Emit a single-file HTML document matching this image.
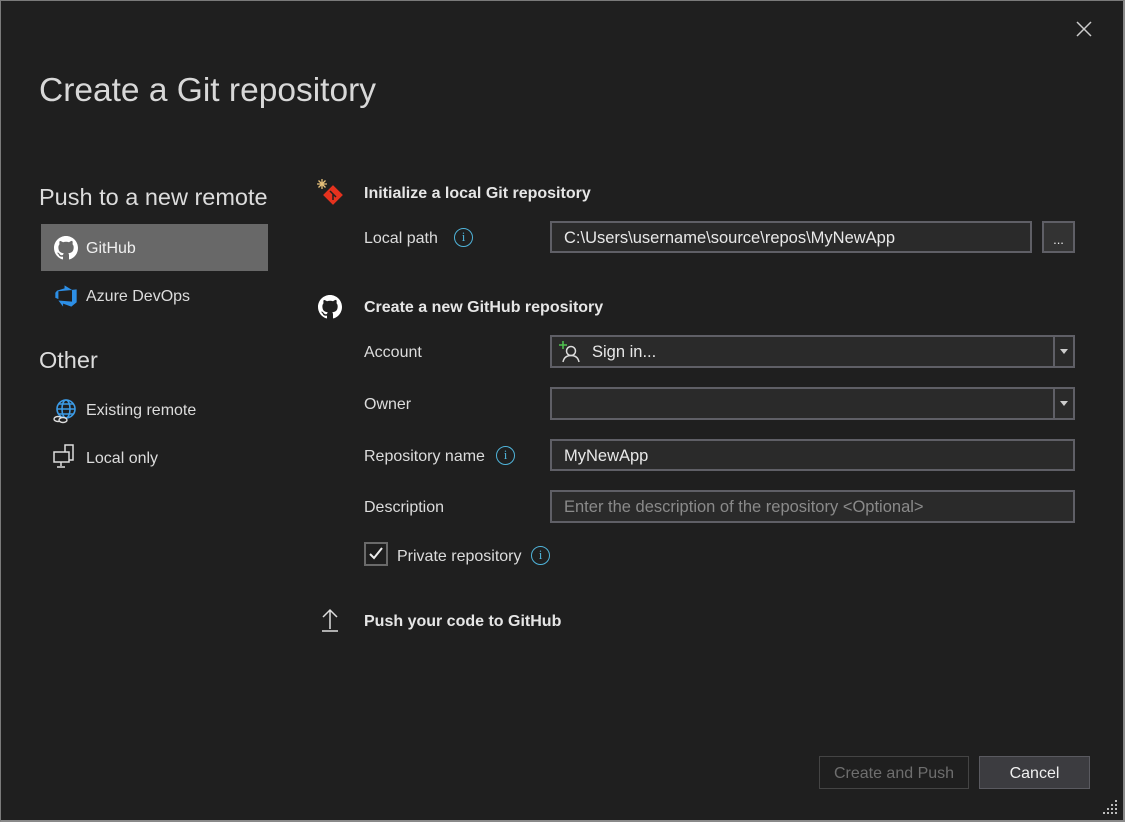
<!DOCTYPE html>
<html><head><meta charset="utf-8"><style>
*{box-sizing:border-box;margin:0;padding:0}
body{width:1125px;height:822px;background:#1f1f1f;font-family:"Liberation Sans",sans-serif;color:#e0e0e0;position:relative;overflow:hidden}
.frame{position:absolute;left:0;top:0;width:1125px;height:822px;border:1px solid #7a7a7a;border-right:2px solid #8a8a8a;border-bottom:2px solid #8a8a8a}
.a{position:absolute;white-space:nowrap}
.t{font-size:16px;color:#dcdcdc}
.b{font-size:16px;font-weight:bold;color:#e6e6e6}
.in{position:absolute;background:#2a2a2a;border:2px solid #5f5f66;font-size:16.5px;color:#e8e8e8;padding-left:12px;line-height:30px}
.info{position:absolute;width:19px;height:19px;border:1.5px solid #4fb3d9;border-radius:50%;color:#4fb3d9;font-size:13px;text-align:center;line-height:16px;font-family:"Liberation Serif",serif}
.dd{position:absolute;right:0;top:0;width:20px;height:100%;border-left:2px solid #5f5f66}
.dd:after{content:"";position:absolute;left:5px;top:12px;border:4px solid transparent;border-top:5px solid #ccc}
</style></head><body>
<div class="frame"></div>
<svg class="a" style="left:1075px;top:20px" width="18" height="18"><path d="M2 2L16 16M16 2L2 16" stroke="#ccc" stroke-width="1.5"/></svg>
<div class="a" style="left:39px;top:72px;font-size:33.5px;color:#d8d8d8;font-weight:300">Create a Git repository</div>

<div class="a" style="left:39px;top:184px;font-size:23.5px;color:#dcdcdc">Push to a new remote</div>
<div class="a" style="left:41px;top:224px;width:227px;height:47px;background:#686868"></div>
<svg class="a" style="left:54px;top:236px" width="24" height="24" viewBox="0 0 16 16"><path fill="#fff" d="M8 0C3.58 0 0 3.58 0 8c0 3.54 2.29 6.53 5.47 7.59.4.07.55-.17.55-.38 0-.19-.01-.82-.01-1.49-2.010.37-2.53-.49-2.69-.94-.09-.23-.48-.94-.82-1.13-.28-.15-.68-.52-.01-.53.63-.01 1.08.58 1.23.82.72 1.21 1.87.87 2.33.66.07-.52.28-.87.51-1.07-1.78-.2-3.64-.89-3.64-3.95 0-.87.31-1.59.82-2.15-.08-.2-.36-1.02.08-2.12 0 0 .67-.21 2.2.82.64-.18 1.32-.27 2-.27s1.36.09 2 .27c1.53-1.04 2.2-.82 2.2-.82.44 1.1.16 1.92.08 2.12.51.56.82 1.27.82 2.15 0 3.07-1.87 3.75-3.65 3.95.29.25.54.73.54 1.48 0 1.07-.01 1.93-.01 2.2 0 .21.15.46.55.38A8.013 8.013 0 0016 8c0-4.42-3.58-8-8-8z"/></svg>
<div class="a t" style="left:86px;top:240px;color:#f0f0f0">GitHub</div>
<svg class="a" style="left:54px;top:284px" width="24" height="24" viewBox="0 0 18 18"><path fill="#2d8fe6" d="M17 4v9.7l-4 3.3-6.2-2.3v2.3L3.3 12.4l10.2.8V4.4L17 4zm-3.4.5L7.9 1v2.3L2.3 5 1 6.6v3.7l2.3 1V5.4z"/></svg>
<div class="a t" style="left:86px;top:288px">Azure DevOps</div>

<div class="a" style="left:39px;top:347px;font-size:23.5px;color:#dcdcdc">Other</div>
<svg class="a" style="left:52px;top:398px" width="26" height="26" viewBox="0 0 26 26" fill="none" stroke="#3c9be6" stroke-width="1.6"><circle cx="14" cy="11" r="9"/><ellipse cx="14" cy="11" rx="4" ry="9"/><path d="M5 11h18M7 6h14M7 16h14"/><g stroke="#ddd" stroke-width="1.4" fill="#1f1f1f"><ellipse cx="6" cy="21" rx="4" ry="2.5"/><ellipse cx="11" cy="22" rx="4" ry="2.5"/></g></svg>
<div class="a t" style="left:86px;top:402px">Existing remote</div>
<svg class="a" style="left:52px;top:444px" width="26" height="26" viewBox="0 0 26 26" fill="none" stroke="#ddd" stroke-width="1.5"><rect x="13" y="1" width="8" height="15"/><rect x="2" y="8" width="15" height="10" fill="#1f1f1f"/><path d="M9 18v4M5 23h8"/></svg>
<div class="a t" style="left:86px;top:450px">Local only</div>

<svg class="a" style="left:316px;top:178px" width="30" height="30" viewBox="0 0 30 30"><g stroke="#e6c07a" stroke-width="1.3"><path d="M6 1v10M1 6h10M2.5 2.5l7 7M9.5 2.5l-7 7"/></g><rect x="10" y="10" width="14" height="14" fill="#e5321e" transform="rotate(45 17 17)"/><path d="M14 13l6 6M17 16v6" stroke="#1f1f1f" stroke-width="1.5"/></svg>
<div class="a b" style="left:364px;top:185px">Initialize a local Git repository</div>
<div class="a t" style="left:364px;top:230px">Local path</div>
<div class="info" style="left:454px;top:228px">i</div>
<div class="in" style="left:550px;top:221px;width:482px;height:32px">C:\Users\username\source\repos\MyNewApp</div>
<div class="in" style="left:1042px;top:221px;width:33px;height:32px;background:#333;padding:0;text-align:center;font-size:13px;line-height:34px">...</div>

<svg class="a" style="left:318px;top:295px" width="24" height="24" viewBox="0 0 16 16"><path fill="#fff" d="M8 0C3.58 0 0 3.58 0 8c0 3.54 2.29 6.53 5.47 7.59.4.07.55-.17.55-.38 0-.19-.01-.82-.01-1.49-2.01.37-2.53-.49-2.69-.94-.09-.23-.48-.94-.82-1.13-.28-.15-.68-.52-.01-.53.63-.01 1.08.58 1.23.82.72 1.21 1.87.87 2.33.66.07-.52.28-.87.51-1.07-1.78-.2-3.64-.89-3.64-3.95 0-.87.31-1.59.82-2.15-.08-.2-.36-1.02.08-2.12 0 0 .67-.21 2.2.82.64-.18 1.32-.27 2-.27s1.36.09 2 .27c1.53-1.04 2.2-.82 2.2-.82.44 1.1.16 1.92.08 2.12.51.56.82 1.27.82 2.15 0 3.07-1.87 3.75-3.65 3.95.29.25.54.73.54 1.48 0 1.07-.01 1.93-.01 2.2 0 .21.15.46.55.38A8.013 8.013 0 0016 8c0-4.42-3.58-8-8-8z"/></svg>
<div class="a b" style="left:364px;top:299px">Create a new GitHub repository</div>

<div class="a t" style="left:364px;top:344px">Account</div>
<div class="in" style="left:550px;top:335px;width:525px;height:33px;padding-left:40px">Sign in...<div class="dd"></div></div>
<svg class="a" style="left:558px;top:340px" width="24" height="24" viewBox="0 0 24 24" fill="none"><path d="M5 1v8M1 5h8" stroke="#4fc34f" stroke-width="1.5"/><circle cx="13" cy="11" r="4.5" stroke="#ddd" stroke-width="1.5"/><path d="M5 22c1-5 4-6.5 8-6.5s7 1.5 8 6.5" stroke="#ddd" stroke-width="1.5"/></svg>

<div class="a t" style="left:364px;top:396px">Owner</div>
<div class="in" style="left:550px;top:387px;width:525px;height:33px"><div class="dd"></div></div>

<div class="a t" style="left:364px;top:448px">Repository name</div>
<div class="info" style="left:496px;top:446px">i</div>
<div class="in" style="left:550px;top:439px;width:525px;height:32px">MyNewApp</div>

<div class="a t" style="left:364px;top:499px">Description</div>
<div class="in" style="left:550px;top:490px;width:525px;height:33px;color:#8a8a8a">Enter the description of the repository &lt;Optional&gt;</div>

<div class="a" style="left:364px;top:542px;width:24px;height:24px;border:2px solid #6a6a6a"></div>
<svg class="a" style="left:367px;top:545px" width="18" height="18"><path d="M3 9l4 4 8-10" stroke="#eee" stroke-width="2" fill="none"/></svg>
<div class="a t" style="left:397px;top:548px">Private repository</div>
<div class="info" style="left:531px;top:546px">i</div>

<svg class="a" style="left:318px;top:607px" width="24" height="26"><path d="M12 3v19M5 10l7-7 7 7M4 24h16" stroke="#ddd" stroke-width="1.5" fill="none"/></svg>
<div class="a b" style="left:364px;top:613px">Push your code to GitHub</div>

<div class="a" style="left:819px;top:756px;width:150px;height:33px;border:1px solid #444;color:#6e6e6e;font-size:16px;text-align:center;line-height:33px">Create and Push</div>
<div class="a" style="left:979px;top:756px;width:111px;height:33px;background:#3c3c40;border:1px solid #5a5a60;color:#f0f0f0;font-size:16px;text-align:center;line-height:33px">Cancel</div>
<svg class="a" style="left:1103px;top:800px" width="16" height="16" fill="#bbb"><rect x="12" y="0" width="2" height="2"/><rect x="8" y="4" width="2" height="2"/><rect x="12" y="4" width="2" height="2"/><rect x="4" y="8" width="2" height="2"/><rect x="8" y="8" width="2" height="2"/><rect x="12" y="8" width="2" height="2"/><rect x="0" y="12" width="2" height="2"/><rect x="4" y="12" width="2" height="2"/><rect x="8" y="12" width="2" height="2"/><rect x="12" y="12" width="2" height="2"/></svg>
</body></html>
